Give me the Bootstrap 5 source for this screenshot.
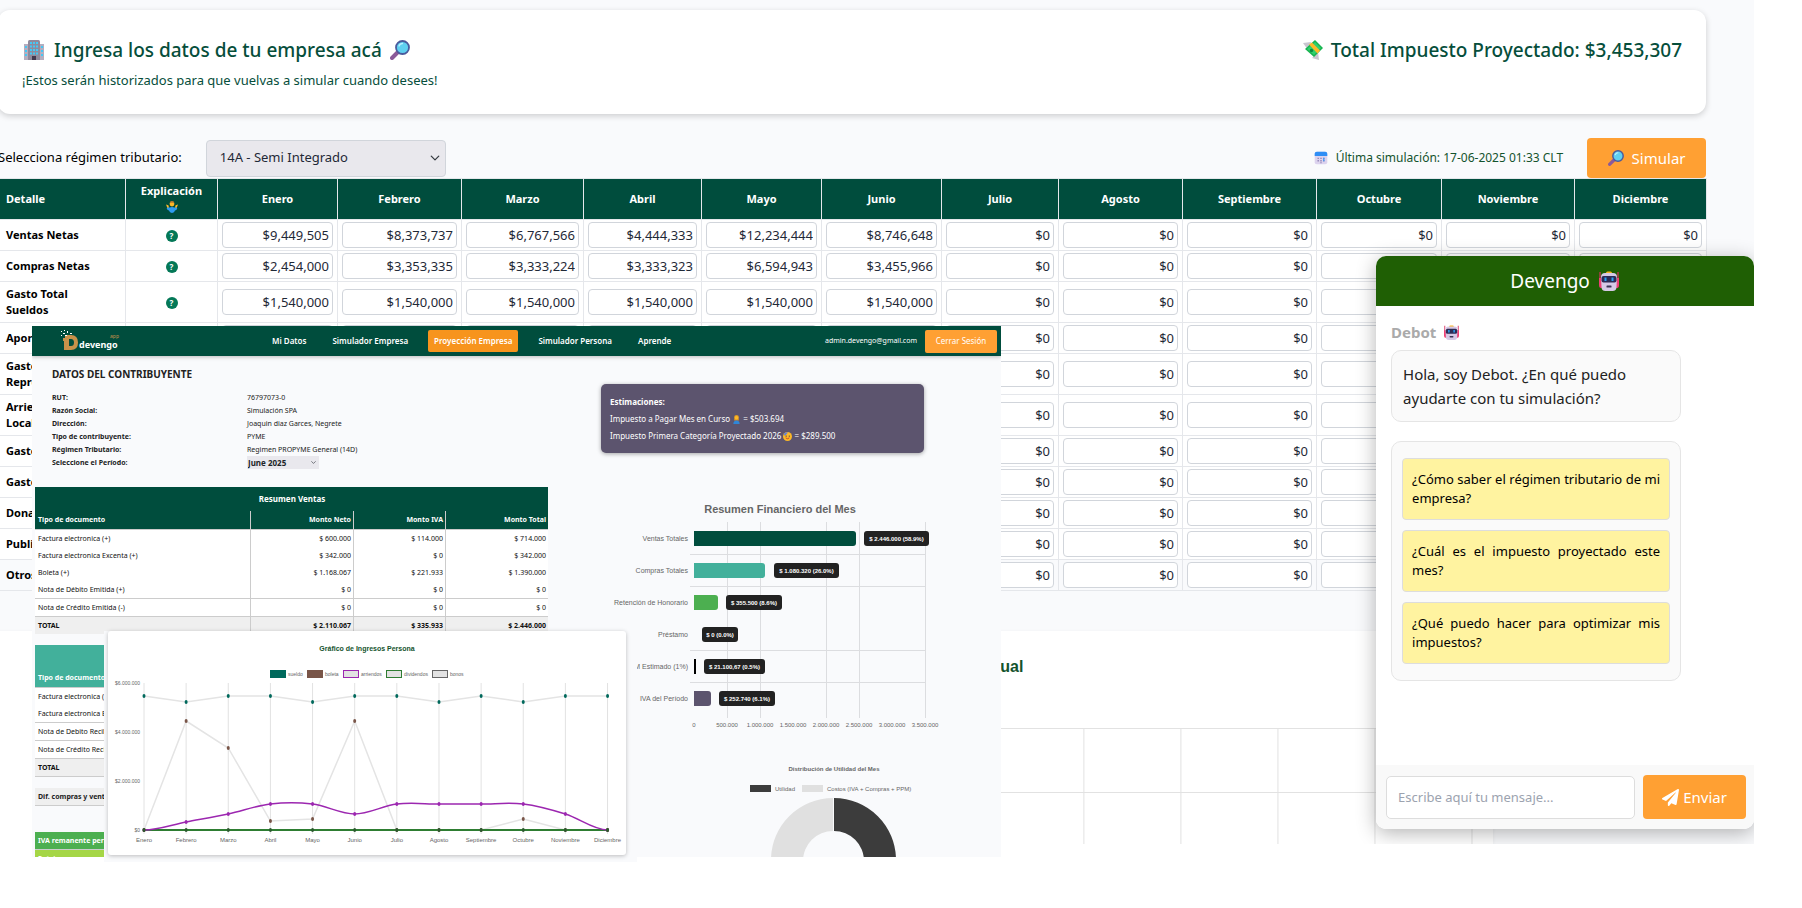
<!DOCTYPE html>
<html lang="es">
<head>
<meta charset="utf-8">
<meta name="viewport" content="width=device-width, initial-scale=1">
<title>Devengo - Simulador Empresa</title>
<link href="https://cdn.jsdelivr.net/npm/bootstrap@5.3.0/dist/css/bootstrap.min.css" rel="stylesheet">
<style>
  :root { --green: #004d3d; --orange: #ffa033; --mist: #f9fafc; --line: #e5e7eb; }
  body { background: #fff; font-family: "Noto Sans", "Open Sans", sans-serif; font-size: 13px; color: #000; }
  .app-page { width: 97.34%; background: var(--mist); overflow: hidden; padding-top: 10px; }
  .app-column { margin-left: -2px; margin-right: 48px; }
  .emo { display: inline-block; flex: none; }

  .intro-card { background: #fff; border-radius: 12px; box-shadow: 0 2px 6px rgba(0,0,0,.18); color: #064e3b; }
  .intro-title { font-size: 19px; line-height: 32px; font-weight: 500; margin: 0; }
  .intro-note { line-height: 20px; }
  .regime-select { width: 240px; height: 37px; background-color: #e9e8ed; border: 1px solid #d1d5db; border-radius: 4px; font-size: 13px; color: #1f2937; padding-left: 13px;
    background-position: right 5px center; background-size: 10px 10px; }
  .last-run { font-size: 12px; color: #14532d; }
  .btn-orange { background: var(--orange); border: 0; color: #fff; border-radius: 4px; }
  .btn-orange:hover { background: #f7941d; color: #fff; }
  .btn-run { width: 119px; height: 40px; font-size: 15px; padding: 0; }

  .sim-table { table-layout: fixed; width: 100%; border-collapse: collapse; background: #fff; font-size: 11px; line-height: 16px; }
  .sim-table th, .sim-table td { border: 1px solid var(--line); }
  .sim-table thead th { background: var(--green); color: #fff; text-align: center; font-weight: 700; padding: 4px; }
  .sim-table thead th:first-child, .sim-table tbody th { text-align: left; font-weight: 700; padding: 4px 7px; }
  .sim-table td { padding: 2px 4px; text-align: center; }
  .sim-table tbody tr:last-child > * { background: var(--mist); }
  .money { display: block; width: 100%; height: 26px; border: 1px solid #d1d5db; border-radius: 4px; background: #fff; text-align: right; padding: 0 3px; font-size: 13px; color: #1f2937; }
  .hint { width: 12px; height: 12px; border: 0; border-radius: 50%; background: #047857; color: #fff; font-size: 8px; line-height: 12px; font-weight: 700; padding: 0; display: inline-block; vertical-align: middle; }
  .annual-card { width: 87.5%; background: #fff; margin-top: 40px; box-shadow: 0 1px 4px rgba(0,0,0,.06); }

  .chat { top: 256px; right: 0; width: 378px; height: 573px; border-radius: 10px; background: #fff; overflow: hidden; }
  .chat-wrap { top: 256px; right: 0; width: 378px; height: 573px; border-radius: 10px; box-shadow: 0 4px 20px rgba(0,0,0,.3); }
  .chat-head { height: 50px; background: #1f5f04; color: #fff; font-size: 19px; }
  .chat-body { padding: 14px 15px; }
  .chat-name { font-size: 15px; line-height: 24px; font-weight: 700; color: #aaa; margin-bottom: 6px; }
  .bubble { width: 290px; background: #fafafa; border: 1px solid #e5e5e5; border-radius: 10px; }
  .bubble-text { font-size: 15px; line-height: 24px; padding: 11px; color: #222; }
  .bubble-asks { display: grid; gap: 10px; padding: 16px 10px; margin-top: 19px; }
  .ask { display: block; width: 100%; background: #fff3a0; border: 1px solid #ddd; border-radius: 4px; padding: 11px 9px; font-size: 13px; line-height: 19px; text-align: justify; color: #000; }
  .chat-foot { background: #f9f9f9; padding: 10px 8px 10px 10px; }
  .chat-input { height: 43px; border: 1px solid #ddd; border-radius: 5px; font-size: 13px; padding: 0 11px; }
  .chat-input::placeholder { color: #9ca3af; }
  .btn-send { width: 103px; height: 44px; font-size: 15px; padding: 0; }

  .shot-proj { left: 32px; top: 326px; width: 969px; height: 531px; background: var(--mist); overflow: hidden; font-size: 8px; color: #222; }
  .shot-nav { height: 30px; background: var(--green); box-shadow: 0 1px 4px rgba(0,0,0,.25); padding: 0 4px 0 27px; }
  .shot-links { margin-left: 143px; gap: 14px; }
  .shot-links a { color: #fff; font-size: 8px; font-weight: 600; line-height: 22px; padding: 0 6px; text-decoration: none; border-radius: 2px; white-space: nowrap; }
  .shot-links a.on { background: #f7941d; }
  .shot-user { font-size: 7px; color: #fff; }
  .shot-exit { width: 72px; height: 23px; border-radius: 2px; font-size: 8px; padding: 0; }
  .shot-left { width: 513px; margin-left: 3px; }
  .who-title { font-size: 10px; line-height: 16px; font-weight: 700; margin: 10px 0 9px 17px; }
  .who { display: grid; grid-template-columns: 195px 1fr; margin: 0 0 18px 17px; font-size: 7px; line-height: 13px; }
  .who dt, .who dd { margin: 0; }
  .month-pick { width: 72px; height: 13px; border: 0; background-color: #e9e8ed; font-size: 8px; line-height: 13px; font-weight: 700; padding: 0 1px; border-radius: 0; background-size: 5px 5px; background-position: right 3px center; }
  .estimate { width: 323px; margin: 28px 0 17px 53px; height: 69px; background: #5c546e; color: #fff; border-radius: 5px; padding: 9px; line-height: 17px; box-shadow: 0 1px 4px rgba(0,0,0,.35); }
  .doc-table { width: 100%; table-layout: fixed; border-collapse: separate; border-spacing: 0; font-size: 7px; line-height: 17px; background: #fff; color: #111; }
  .doc-table th, .doc-table td { padding: 0 2px; height: 17px; text-align: right; white-space: nowrap; }
  .doc-table th:first-child, .doc-table td:first-child { text-align: left; padding-left: 3px; }
  .doc-table tr > :not(:last-child):not([colspan]) { border-right: 1px solid #ccc; }
  .doc-table thead th { background: var(--green); color: #fff; line-height: 18px; }
  .doc-table thead .cap th { text-align: center; height: 24px; font-size: 8px; }
  .doc-table.teal { margin-top: 11px; }
  .doc-table.teal thead th { background: #42b09b; }
  .doc-table .ruled > * { border-bottom: 1px solid #ccc; }
  .doc-table .sum > * { background: #efefef; font-weight: 700; }
  .strip { font-size: 7px; font-weight: 700; line-height: 17px; padding-left: 3px; }
  .strip-diff { background: #efefef; margin: 11px 0 26px; border-bottom: 1px solid #ccc; }
  .strip-iva { background: #4caf50; color: #fff; border-bottom: 1px solid #ccc; }
  .strip-loan { background: #a5d646; color: #fff; }

  .shot-income { left: 104px; top: 631px; width: 533px; height: 231px; background: var(--mist); padding: 0 11px 7px 4px; }
  .income-card { background: #fff; border-radius: 3px; box-shadow: 0 1px 4px rgba(0,0,0,.25); }
  .plot { display: block; width: 100%; height: auto; font-family: "Liberation Sans", sans-serif; }
</style>
</head>
<body>
<svg width="0" height="0" class="position-absolute" aria-hidden="true">
  <defs>
    <symbol id="e-building" viewBox="0 0 20 20">
      <path d="M0 4h5v16H0zM15 4h5v16h-5z" fill="#b5aebf"/><path d="M4 1.5Q4 0 5.500 0h9Q16 0 16 1.500V20H4z" fill="#8f8a9c"/>
      <path d="M6 2h2v2H6zm3 0h2v2H9zm3 0h2v2h-2zM6 5.500h2v2H6zm3 0h2v2H9zm3 0h2v2h-2zM6 9h2v2H6zm3 0h2v2H9zm3 0h2v2h-2zM6 12.500h2v2H6zm3 0h2v2H9zm3 0h2v2h-2zM1 6h2v2H1zm0 4h2v2H1zm0 4h2v2H1zM17 6h2v2h-2zm0 4h2v2h-2zm0 4h2v2h-2z" fill="#44c8f5"/><path d="M8 16h4v4H8z" fill="#43384f"/>
    </symbol>
    <symbol id="e-search" viewBox="0 0 20 20">
      <path d="M7.500 12.500L2 18" stroke="#8b5a99" stroke-width="4" stroke-linecap="round"/><circle cx="12.500" cy="7.500" r="6.500" fill="#5fd0f0" stroke="#4a5a9c" stroke-width="1.800"/><path d="M9 6q1-2.500 3.500-2.500" stroke="#b9f0ff" stroke-width="1.300" fill="none" stroke-linecap="round"/>
    </symbol>
    <symbol id="e-money" viewBox="0 0 20 20">
      <path d="M0 3l8-1-3 8zM16 20l-7-2 6-6z" fill="#c9c5cf"/><path d="M12 0l8 8-9 9-9-8z" fill="#17b34f"/><path d="M12 2l6 6-7 7-7-6z" fill="#2fd06d"/><path d="M6 4.500l3-2 8 8-2.500 3z" fill="#fcb827"/><circle cx="8.500" cy="10.500" r="1.700" fill="#0d8a3c"/>
    </symbol>
    <symbol id="e-calendar" viewBox="0 0 20 20">
      <rect x="1" y="1" width="18" height="18" rx="3" fill="#dcd3ee"/><path d="M1 7V4q0-3 3-3h12q3 0 3 3v3z" fill="#2f8ef5"/><path d="M5 9.500h2v2H5zm4 0h2v2H9zm4 0h2v2h-2zM5 13h2v2H5zm4 0h2v2H9zm4 0h2v2h-2zM9 16h2v1.500H9z" fill="#9385b5"/><path d="M13 9.500h2v5h-2z" fill="#4a9bf5"/>
    </symbol>
    <symbol id="e-robot" viewBox="0 0 20 20">
      <path d="M1 1v11M19 1v11" stroke="#d8305f" stroke-width="1.200"/><path d="M0 7h3v10H2q-2 0-2-3zM20 7h-3v10h1q2 0 2-3z" fill="#ee3f75"/><path d="M7 2q0-1.500 1.500-1.500h3Q13 .5 13 2v1H7z" fill="#f9b21e"/><path d="M2 6q0-4 4-4h8q4 0 4 4l-.5 10q0 4-4 4h-7q-4 0-4-4z" fill="#d6c9e6"/><rect x="2.500" y="5" width="15" height="6.500" rx="2" fill="#2c2b55"/><path d="M5.500 6.500h2v3.500h-2zM12.500 6.500h2v3.500h-2z" fill="#2c9ff0"/><rect x="7.500" y="14.500" width="5" height="2" rx=".5" fill="#3b3555"/>
    </symbol>
    <symbol id="e-shrug" viewBox="0 0 20 20">
      <circle cx="10" cy="5" r="4" fill="#fcb827"/><path d="M6 4q0-4 4-4t4 4l-2-1H8z" fill="#b9782f"/><path d="M2 10l4 1 4-1 4 1 4-1q2 3-1 5l-2 1q-1 4-5 4t-5-4l-2-1q-3-2-1-5z" fill="#2f9bf0"/><path d="M0 6l4 1 1 4H2zM20 6l-4 1-1 4h3z" fill="#fcb827"/>
    </symbol>
    <symbol id="e-person" viewBox="0 0 20 20">
      <path d="M5 4q0-4 5-4t5 4v8H5z" fill="#e39a22"/><circle cx="10" cy="6" r="4" fill="#fcb827"/><path d="M3 20q0-8 7-8t7 8z" fill="#2f86d8"/>
    </symbol>
    <symbol id="e-face" viewBox="0 0 20 20">
      <circle cx="10" cy="10" r="10" fill="#fcb827"/><path d="M2 4q5-5 9-3L4 9z" fill="#5a7de0"/><circle cx="7" cy="9" r="1.500" fill="#43384f"/><circle cx="14" cy="9" r="1.500" fill="#43384f"/><path d="M6 13q4 4 8 0" stroke="#c0392b" stroke-width="2" fill="none"/>
    </symbol>
  </defs>
</svg>

<div class="position-relative min-vh-100">
  <main class="app-page position-relative">
    <div class="app-column">
      <section class="intro-card p-4 d-flex justify-content-between">
        <div>
          <h1 class="intro-title d-flex align-items-center"><svg class="emo me-2" width="24" height="20"><use href="#e-building"/></svg>Ingresa los datos de tu empresa acá<svg class="emo ms-2" width="20" height="20"><use href="#e-search"/></svg></h1>
          <div class="intro-note mt-1">¡Estos serán historizados para que vuelvas a simular cuando desees!</div>
        </div>
        <h2 class="intro-title d-flex align-items-center align-self-start"><svg class="emo me-2" width="20" height="20"><use href="#e-money"/></svg>Total Impuesto Proyectado: $3,453,307</h2>
      </section>

      <div class="d-flex align-items-center justify-content-between mt-4">
        <div class="d-flex align-items-center gap-4">
          <label for="regime">Selecciona régimen tributario:</label>
          <select id="regime" class="form-select regime-select"><option>14A - Semi Integrado</option></select>
        </div>
        <div class="d-flex align-items-center gap-4">
          <span class="last-run d-flex align-items-center gap-2"><svg class="emo" width="14" height="14"><use href="#e-calendar"/></svg>Última simulación: 17-06-2025 01:33 CLT</span>
          <button type="button" class="btn btn-orange btn-run d-flex align-items-center justify-content-center gap-2"><svg class="emo" width="16" height="16"><use href="#e-search"/></svg>Simular</button>
        </div>
      </div>

      <table class="sim-table">
        <colgroup><col width="127"><col width="92"><col width="120"><col width="124"><col width="122"><col width="118"><col width="120"><col width="120"><col width="117"><col width="124"><col width="134"><col width="125"><col width="133"><col width="132"></colgroup>
        <thead><tr id="months"><th scope="col">Detalle</th><th scope="col">Explicación<svg class="emo d-block mx-auto my-0" width="12" height="16"><use href="#e-shrug"/></svg></th></tr></thead>
        <tbody id="lines"></tbody>
      </table>

      <section class="annual-card">
        <svg class="plot" viewBox="-2 631 1494 213" role="img" aria-label="Proyección anual">
          <text x="1023" y="672" text-anchor="end" font-size="16" font-weight="700" fill="#14532d">Anual</text>
          <path d="M900 728.500h572M900 792.500h572M1083.500 728v116M1180.500 728v116M1277.500 728v116M1374.500 728v116M1471.500 728v116" stroke="#e2e2e2" fill="none"/>
        </svg>
      </section>
    </div>

    <div class="chat-wrap position-absolute"></div>
    <aside class="chat position-absolute d-flex flex-column">
      <div class="chat-head d-flex align-items-center justify-content-center gap-2">Devengo <svg class="emo" width="22" height="20"><use href="#e-robot"/></svg></div>
      <div class="chat-body flex-grow-1">
        <div class="chat-name d-flex align-items-center gap-2">Debot <svg class="emo" width="15" height="15"><use href="#e-robot"/></svg></div>
        <div class="bubble bubble-text">Hola, soy Debot. ¿En qué puedo ayudarte con tu simulación?</div>
        <div class="bubble bubble-asks">
          <button type="button" class="ask">¿Cómo saber el régimen tributario de mi empresa?</button>
          <button type="button" class="ask">¿Cuál es el impuesto proyectado este mes?</button>
          <button type="button" class="ask">¿Qué puedo hacer para optimizar mis impuestos?</button>
        </div>
      </div>
      <form class="chat-foot d-flex align-items-center">
        <input type="text" class="form-control chat-input me-2" placeholder="Escribe aquí tu mensaje..." aria-label="Mensaje">
        <button type="button" class="btn btn-orange btn-send flex-shrink-0 d-flex align-items-center justify-content-center gap-1"><svg width="17" height="17" viewBox="0 0 512 512" fill="#fff"><path d="M476 3.200L12.500 270.600c-18.100 10.400-15.800 35.600 2.200 43.200L121 358.400l287.300-253.200c5.500-4.900 13.300 2.600 8.600 8.300L176 407v80.500c0 23.600 28.500 32.900 42.500 15.800L282 426l124.600 52.200c14.200 6 30.400-2.900 33-18.200l72-432C515 7.800 493.300-6.800 476 3.200z"/></svg>Enviar</button>
      </form>
    </aside>
  </main>

  <section class="shot-proj position-absolute">
    <nav class="shot-nav d-flex align-items-center position-relative">
      <svg width="64" height="26" viewBox="0 0 64 26" role="img" aria-label="devengo app">
        <path d="M6 7h6q7 0 7 7.500T12 22H5V13H4V10h2z" fill="#c9924a"/><path d="M10 11h2q3 0 3 3.500t-3 3.500h-2z" fill="#004d3d"/>
        <path d="M2 3h1v1H2zM5 2h1v1H5zM4 5h2v1H4zM8 3h1v2H8zM2 7h1v1H2zM11 5h2v1h-2zM6 7h2v1H6z" fill="#fff"/>
        <text x="20" y="20" font-size="9" font-weight="700" fill="#fff" font-family="Noto Sans">devengo</text><text x="51" y="10" font-size="5" fill="#c9924a" font-family="Noto Sans">app</text>
      </svg>
      <div class="shot-links d-flex">
        <a href="#">Mi Datos</a><a href="#">Simulador Empresa</a><a href="#" class="on">Proyección Empresa</a><a href="#">Simulador Persona</a><a href="#">Aprende</a>
      </div>
      <span class="shot-user ms-auto me-2">admin.devengo@gmail.com</span>
      <button type="button" class="btn btn-orange shot-exit">Cerrar Sesión</button>
    </nav>
    <div class="d-flex">
      <div class="shot-left flex-shrink-0">
        <h3 class="who-title">DATOS DEL CONTRIBUYENTE</h3>
        <dl class="who">
          <dt>RUT:</dt><dd>76797073-0</dd>
          <dt>Razón Social:</dt><dd>Simulación SPA</dd>
          <dt>Dirección:</dt><dd>Joaquin diaz Garces, Negrete</dd>
          <dt>Tipo de contribuyente:</dt><dd>PYME</dd>
          <dt>Régimen Tributario:</dt><dd>Regimen PROPYME General (14D)</dd>
          <dt><label for="period">Seleccione el Período:</label></dt><dd><select id="period" class="form-select month-pick"><option>June 2025</option></select></dd>
        </dl>
        <table class="doc-table">
          <colgroup><col width="216"><col width="103"><col width="92"><col width="102"></colgroup>
          <thead>
            <tr class="cap"><th colspan="4">Resumen Ventas</th></tr>
            <tr class="ruled"><th>Tipo de documento</th><th>Monto Neto</th><th>Monto IVA</th><th>Monto Total</th></tr>
          </thead>
          <tbody>
            <tr><td>Factura electronica (+)</td><td>$ 600.000</td><td>$ 114.000</td><td>$ 714.000</td></tr>
            <tr><td>Factura electronica Excenta (+)</td><td>$ 342.000</td><td>$ 0</td><td>$ 342.000</td></tr>
            <tr><td>Boleta (+)</td><td>$ 1.168.067</td><td>$ 221.933</td><td>$ 1.390.000</td></tr>
            <tr class="ruled"><td>Nota de Débito Emitida (+)</td><td>$ 0</td><td>$ 0</td><td>$ 0</td></tr>
            <tr class="ruled"><td>Nota de Crédito Emitida (-)</td><td>$ 0</td><td>$ 0</td><td>$ 0</td></tr>
            <tr class="sum"><td>TOTAL</td><td>$ 2.110.067</td><td>$ 335.933</td><td>$ 2.446.000</td></tr>
          </tbody>
        </table>
        <table class="doc-table teal">
          <thead>
            <tr class="cap"><th>&nbsp;</th></tr>
            <tr class="ruled"><th>Tipo de documento</th></tr>
          </thead>
          <tbody>
            <tr><td>Factura electronica (+)</td></tr>
            <tr class="ruled"><td>Factura electronica Excenta (+)</td></tr>
            <tr class="ruled"><td>Nota de Debito Recibida (+)</td></tr>
            <tr class="ruled"><td>Nota de Crédito Recibida (-)</td></tr>
            <tr class="sum ruled"><td>TOTAL</td></tr>
          </tbody>
        </table>
        <div class="strip strip-diff">Dif. compras y ventas</div>
        <div class="strip strip-iva">IVA remanente período</div>
        <div class="strip strip-loan">Préstamo</div>
      </div>
      <div class="flex-grow-1">
        <div class="estimate">
          <strong class="d-block">Estimaciones:</strong>
          <div>Impuesto a Pagar Mes en Curso <svg class="emo" width="9" height="9"><use href="#e-person"/></svg> = $503.694</div>
          <div>Impuesto Primera Categoría Proyectado 2026 <svg class="emo" width="9" height="9"><use href="#e-face"/></svg> = $289.500</div>
        </div>
        <svg class="plot" id="monthPlot" viewBox="548 470 453 387" font-size="7" fill="#666" role="img" aria-label="Resumen Financiero del Mes"></svg>
      </div>
    </div>
  </section>

  <section class="shot-income position-absolute">
    <div class="income-card"><svg class="plot" id="incomePlot" viewBox="108 631 518 224" font-size="6" fill="#666" role="img" aria-label="Gráfico de Ingresos Persona"></svg></div>
  </section>
</div>

<script>
  // Monthly simulation grid
  const months = ['Enero','Febrero','Marzo','Abril','Mayo','Junio','Julio','Agosto','Septiembre','Octubre','Noviembre','Diciembre'];
  const salary = Array(6).fill('$1,540,000');
  const rows = [
    ['Ventas Netas', ['$9,449,505','$8,373,737','$6,767,566','$4,444,333','$12,234,444','$8,746,648']],
    ['Compras Netas', ['$2,454,000','$3,353,335','$3,333,224','$3,333,323','$6,594,943','$3,455,966']],
    ['Gasto Total<br>Sueldos', salary],
    ['Aportes', []], ['Gastos<br>Represent.', []], ['Arriendo<br>Local', []], ['Gastos', []], ['Gastos', []],
    ['Donaciones', []], ['Publicidad', []], ['Otros', []]
  ];
  document.getElementById('months').insertAdjacentHTML('beforeend', months.map(m => `<th scope="col">${m}</th>`).join(''));
  document.getElementById('lines').innerHTML = rows.map(([name, values]) =>
    `<tr><th scope="row">${name}</th><td><button type="button" class="hint" aria-label="Explicación">?</button></td>` +
    months.map((m, i) => `<td><input class="money" type="text" aria-label="${name.replace('<br>', ' ')} ${m}" value="${values[i] || '$0'}"></td>`).join('') + '</tr>').join('');

  // Horizontal bars and doughnut of the month
  const bars = [
    ['Ventas Totales', 162, '#004d3d', '$ 2.446.000 (58.9%)', 864, 65],
    ['Compras Totales', 71, '#42b09b', '$ 1.080.320 (26.0%)', 774, 65],
    ['Retención de Honorario', 24, '#4caf50', '$ 355.500 (8.6%)', 726, 56],
    ['Préstamo', 0, '#000', '$ 0 (0.0%)', 702, 36],
    ['PPM Estimado (1%)', 2, '#000', '$ 21.100,67 (0.5%)', 704, 61],
    ['IVA del Período', 17, '#5c546e', '$ 252.740 (6.1%)', 719, 56]
  ];
  let s = '<text x="780" y="513" text-anchor="middle" font-size="11" font-weight="700">Resumen Financiero del Mes</text>';
  s += '<g stroke="#dcdde0">' + [727, 760, 826, 859, 925].map(x => `<path d="M${x + .5} 522V718"/>`).join('') +
       [554, 586, 650, 682].map(y => `<path d="M690 ${y + .5}H926"/>`).join('') + '</g>';
  bars.forEach(([label, w, color, tip, tx, tw], i) => {
    const y = 531 + i * 32;
    s += `<text x="688" y="${y + 10}" text-anchor="end">${label}</text>`;
    if (w) s += w > 4 ? `<path d="M694 ${y}h${w - 3}q3 0 3 3v9q0 3-3 3h${3 - w}z" fill="${color}"/>` : `<path d="M694 ${y}h${w}v15h-${w}z" fill="${color}"/>`;
    s += `<rect x="${tx}" y="${y}" width="${tw}" height="15" rx="3" fill="#222"/><text x="${tx + tw / 2}" y="${y + 10}" text-anchor="middle" font-size="6" font-weight="700" fill="#fff">${tip}</text>`;
  });
  ['0','500.000','1.000.000','1.500.000','2.000.000','2.500.000','3.000.000','3.500.000'].forEach((t, i) =>
    s += `<text x="${694 + i * 33}" y="727" text-anchor="middle" font-size="6">${t}</text>`);
  s += '<text x="834" y="771" text-anchor="middle" font-size="6" font-weight="700">Distribución de Utilidad del Mes</text>' +
    '<path d="M750 785h21v7h-21z" fill="#3c3c3c"/><text x="775" y="791" font-size="6">Utilidad</text><path d="M802 785h21v7h-21z" fill="#e0e0e0"/><text x="827" y="791" font-size="6">Costos (IVA + Compras + PPM)</text>' +
    '<path d="M834 798a62 62 0 0 1 0 124v-31a30 30 0 0 0 0-60z" fill="#3c3c3c"/><path d="M833 798a62 62 0 0 0 0 124v-31a30 30 0 0 1 0-60z" fill="#e0e0e0"/>';
  document.getElementById('monthPlot').innerHTML = s;

  // Yearly income lines
  const X = i => 144 + i * 42.14;
  const sueldo = [696,702,696,696,702,696,696,702,696,702,696,696];
  const boleta = [830,721,748,821,819,721,830,830,830,819,830,830];
  const line = a => 'M' + a.map((y, i) => X(i) + ' ' + y).join('L');
  const dots = (a, c) => a.map((y, i) => `<ellipse cx="${X(i)}" cy="${y}" rx="1.500" ry="2" fill="${c}"/>`).join('');
  const rent = [830,822,814,804,804,814,804,804,804,804,814,830];
  let curve = `M${X(0)} ${rent[0]}`;
  const slope = i => (i > 0 && i < 11) ? (rent[i + 1] - rent[i - 1]) / 6 : 0;
  for (let i = 1; i < 12; i++) curve += `C${X(i - 1) + 14} ${rent[i - 1] + slope(i - 1)} ${X(i) - 14} ${rent[i] - slope(i)} ${X(i)} ${rent[i]}`;
  let g = '<text x="367" y="651" text-anchor="middle" font-size="7" font-weight="700" fill="#14532d">Gráfico de Ingresos Persona</text>';
  [['sueldo',270,'#00695c','#00695c'],['boleta',307,'#795548','#795548'],['arriendos',343,'#e2e2e2','#9c27b0'],['dividendos',386,'#e2e2e2','#2e7d32'],['bonos',432,'#e2e2e2','#666']].forEach(([t, x, f, c]) =>
    g += `<rect x="${x + .5}" y="670.500" width="15" height="7" fill="${f}" stroke="${c}"/><text x="${x + 18}" y="676" font-size="5">${t}</text>`);
  g += '<g stroke="#e2e2e2">' + months.map((m, i) => `<path d="M${X(i)} 683V834"/>`).join('') + '</g>';
  [['$6.000.000',683],['$4.000.000',732],['$2.000.000',781],['$0',830]].forEach(([t, y]) => g += `<text x="140" y="${y + 2}" text-anchor="end" font-size="5">${t}</text>`);
  months.forEach((m, i) => g += `<text x="${X(i)}" y="842" text-anchor="middle">${m}</text>`);
  g += `<path d="${line(sueldo)}" stroke="#e4e4e4" stroke-width="1.500" fill="none"/><path d="${line(boleta)}" stroke="#e4e4e4" stroke-width="1.500" fill="none"/>` +
    `<path d="M144 830H607" stroke="#2e7d32" stroke-width="2"/><path d="${curve}" stroke="#9c27b0" stroke-width="1.500" fill="none"/>` +
    dots(sueldo, '#00695c') + dots(rent, '#9c27b0') + dots(boleta, '#795548') + dots(Array(12).fill(830), '#2c5a2f');
  document.getElementById('incomePlot').innerHTML = g;
</script>
<script src="https://cdn.jsdelivr.net/npm/bootstrap@5.3.0/dist/js/bootstrap.bundle.min.js"></script>
</body>
</html>
